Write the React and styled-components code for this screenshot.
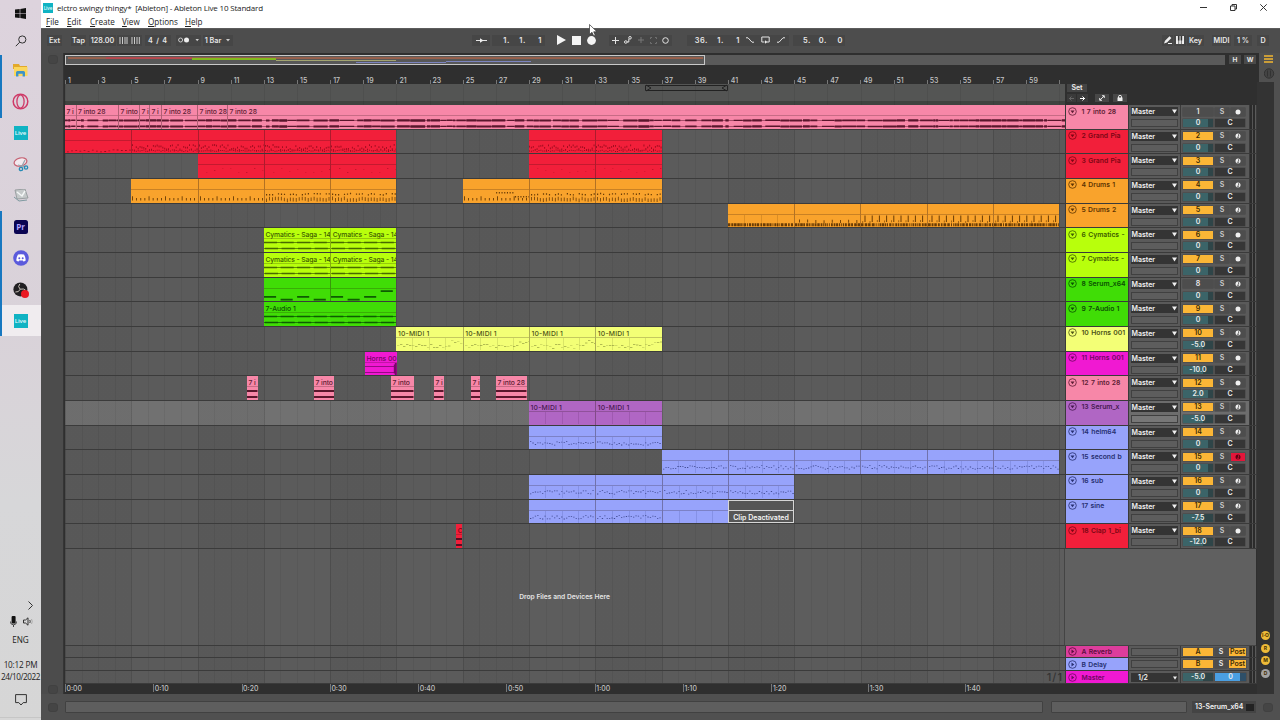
import React from "react";
import styled, { createGlobalStyle, css } from "styled-components";

const Global = createGlobalStyle`
  * { box-sizing: border-box; }
  html, body { margin: 0; padding: 0; }
  body { width: 1280px; height: 720px; overflow: hidden; background: #4c4c4c; }
  svg { display: block; flex: none; }
`;

const UI = `Inter, "Liberation Sans", sans-serif`;
const SYS = `"Open Sans", "Noto Sans", sans-serif`;
const BAR = 16.573;

/* ---------- shell ---------- */
const Screen = styled.div`
  display: flex;
  width: 1280px;
  height: 720px;
  overflow: hidden;
  position: relative;
  font-family: ${UI};
`;
const Taskbar = styled.aside`
  width: 41px;
  flex: none;
  display: flex;
  flex-direction: column;
  background: linear-gradient(#ddd3dd, #d9d2d9 45%, #d7d7d9 70%, #d6d6d6);
  color: #222;
  font-family: ${SYS};
`;
const TaskItem = styled.div`
  height: ${(p) => p.$h || 31.3}px;
  flex: none;
  display: flex;
  align-items: center;
  justify-content: center;
  padding-right: ${(p) => (p.$open ? 2 : 0)}px;
  border-left: ${(p) => (p.$open ? "2px solid #1878c0" : "0")};
  background: ${(p) => (p.$active ? "#f0ecef" : "transparent")};
`;
const LiveBadge = styled.div`
  width: ${(p) => p.$s || 14}px;
  height: ${(p) => p.$s || 14}px;
  flex: none;
  background: #10b3c3;
  color: #e9fbfd;
  font: 600 ${(p) => (p.$s ? 4.5 : 6)}px/${(p) => p.$s || 14}px ${SYS};
  text-align: center;
`;
const PrBadge = styled.div`
  width: 14px;
  height: 14px;
  border-radius: 2.5px;
  background: #0b0552;
  color: #b3a5ff;
  font: 700 8px/13px ${SYS};
  text-align: center;
`;
const Tray = styled.div`
  flex: 1;
  display: flex;
  flex-direction: column;
  justify-content: flex-end;
  align-items: center;
  font-size: 8.2px;
  line-height: 12px;
  white-space: nowrap;
  border-bottom: 1px solid #c6c6c6;
  margin-bottom: 2px;
`;
const TrayLine = styled.div`
  height: ${(p) => p.$h}px;
  flex: none;
  display: flex;
  align-items: center;
  justify-content: ${(p) => (p.$end ? "flex-end" : "center")};
  gap: 6px;
  width: 100%;
  padding-right: ${(p) => p.$pr || 0}px;
  padding-left: ${(p) => p.$pl || 0}px;
  letter-spacing: ${(p) => p.$ls || 0}px;
`;

const Win = styled.main`
  flex: 1;
  min-width: 0;
  display: flex;
  flex-direction: column;
  background: #4c4c4c;
`;
const TitleBar = styled.header`
  height: 15px;
  background: #fff;
  display: flex;
  align-items: center;
  font: 8px/15px ${SYS};
  color: #222;
  padding-left: 2px;
  white-space: pre;
`;
const TitleText = styled.span`
  margin-left: 4px;
  letter-spacing: -0.18px;
`;
const WinButtons = styled.div`
  margin: 0 13px 0 auto;
  display: flex;
  gap: 23px;
  align-items: center;
`;
const MenuBar = styled.nav`
  height: 13px;
  background: #fff;
  display: flex;
  padding-left: 5px;
  font: 8.1px/13px ${SYS};
  color: #222;
`;
const MenuItem = styled.span`
  width: ${(p) => p.$w}px;
  &::first-letter { text-decoration: underline; }
`;

/* ---------- transport ---------- */
const Transport = styled.div`
  height: 25px;
  padding-bottom: 2px;
  display: flex;
  align-items: center;
  background: #4d4d4d;
  border-top: 1px solid #5c5c5c;
  color: #e8e8e8;
  font: 600 7.2px/11px ${UI};
  white-space: pre;
`;
const Cell = styled.div`
  height: 11px;
  flex: none;
  width: ${(p) => p.$w}px;
  margin-left: ${(p) => p.$ml || 0}px;
  display: flex;
  align-items: center;
  justify-content: center;
  background: ${(p) => (p.$flat ? "transparent" : "#464646")};
  letter-spacing: ${(p) => p.$ls || 0}px;
`;
const Digits = styled(Cell)`
  justify-content: flex-end;
  padding-right: ${(p) => p.$pr || 2}px;
  font-size: 7.4px;
`;
const Digit = styled.span`
  width: 16px;
  text-align: right;
  letter-spacing: 0.6px;
`;

/* ---------- arrangement ---------- */
const Body = styled.div`
  display: flex;
  height: 641px;
  flex: none;
`;
const Gutter = styled.div`
  width: 23px;
  flex: none;
  padding: 2px 5px 0 7px;
  display: flex;
  flex-direction: column;
  justify-content: space-between;
  border-right: 1px solid #353535;
`;
const GhostKnob = styled.i`
  width: 10px;
  height: 9px;
  border-radius: 3px;
  margin-left: ${(p) => p.$ml || 0}px;
  background: #454545;
  border: 1px solid #414141;
`;
const Arrangement = styled.section`
  width: 1193px;
  flex: none;
  padding-left: 1px;
  display: flex;
  flex-direction: column;
  background: #2f2f2f;
`;
const OverviewRow = styled.div`
  height: 12px;
  padding-top: 2px;
  display: flex;
  flex: none;
`;
const Overview = styled.div`
  width: 1160px;
  height: 10px;
  background: #5a5a5a;
`;
const OverviewFrame = styled.div`
  width: 640px;
  height: 10px;
  border: 1px solid #c8c8c8;
  background: #585858;
`;
const MiniButton = styled.div`
  width: 12px;
  height: 9px;
  margin-left: ${(p) => p.$ml}px;
  background: #4a4a4a;
  color: #e6e6e6;
  font: 700 6.5px/10px ${UI};
  text-align: center;
`;
const Ruler = styled.div`
  height: 19px;
  flex: none;
  display: flex;
  align-items: flex-end;
  width: 1000px;
  overflow: hidden;
`;
const RulerMark = styled.div`
  flex: none;
  width: ${BAR * 2}px;
  height: 8px;
  padding-left: 3px;
  font: 500 7px/9px ${UI};
  color: #c4c4c4;
  background: linear-gradient(#777, #777) 0 4px / 1px 4px no-repeat;
`;
const LoopRow = styled.div`
  height: 21px;
  flex: none;
  display: flex;
`;
const ScrubArea = styled.div`
  width: 1000px;
  height: 21px;
  padding-left: 580px;
  background: repeating-linear-gradient(90deg, rgba(0,0,0,.07) 0 1px, transparent 1px ${BAR * 2}px),
    linear-gradient(#545554 0 17px, #404340 17px);
`;
const SetHeader = styled.div`
  width: 62px;
  margin-left: 1px;
  padding-left: 1px;
  font: 600 7px/8px ${UI};
  color: #eee;
`;
const SetLabel = styled.div`
  width: 20px;
  height: 8px;
  text-align: center;
  background: #444;
`;
const SetButtons = styled.div`
  display: flex;
  margin-top: 2px;
`;
const SetButton = styled.div`
  width: ${(p) => p.$w}px;
  height: 8px;
  margin-left: ${(p) => p.$ml || 0}px;
  background: ${(p) => p.$bg || "#474747"};
  display: flex;
  align-items: center;
  justify-content: center;
`;

const laneGrid = css`
  background-image: repeating-linear-gradient(90deg, rgba(0,0,0,.09) 0 1px, transparent 1px ${BAR * 4}px),
    repeating-linear-gradient(90deg, rgba(0,0,0,.06) 0 1px, transparent 1px ${BAR}px),
    repeating-linear-gradient(90deg, rgba(0,0,0,.03) 0 ${BAR * 4}px, transparent ${BAR * 4}px ${BAR * 8}px);
`;
const TrackRow = styled.div`
  height: 24.67px;
  flex: none;
  display: flex;
`;
const Lane = styled.div`
  width: 1000px;
  flex: none;
  display: flex;
  overflow: hidden;
  border-bottom: 1px solid #3b3b3b;
  background-color: ${(p) => (p.$sel ? "#717171" : "#5b5b5b")};
  ${laneGrid}
`;
const ClipBox = styled.div`
  height: 100%;
  flex: none;
  overflow: hidden;
  background: ${(p) => p.$c};
  color: ${(p) => p.$ink};
  border-left: ${(p) => (p.$split ? "1px solid rgba(40,20,20,.34)" : "0")};
`;
const ClipName = styled.div`
  height: 11px;
  padding-left: 1.5px;
  font: 500 6.8px/13px ${UI};
  letter-spacing: ${(p) => p.$ls}px;
  white-space: nowrap;
  border-bottom: 1px solid rgba(30,10,10,.22);
`;
const Deactivated = styled.div`
  height: 100%;
  border: 1px solid #d6d6d6;
  background: #565656;
  color: #f4f4f4;
  font: 600 7px/13px ${UI};
  text-align: center;
  white-space: nowrap;
  flex: none;
`;
const DeactivatedTop = styled.div`
  height: 10.5px;
  border-bottom: 1px solid #d6d6d6;
`;

/* ---------- track headers ---------- */
const Header = styled.div`
  width: 192px;
  display: flex;
  background: #3a3a3a;
  padding-left: 1px;
`;
const NameCell = styled.div`
  width: 62px;
  flex: none;
  display: flex;
  gap: 4.5px;
  padding: 1.5px 0 0 2px;
  margin-bottom: 1px;
  background: ${(p) => p.$c};
  color: ${(p) => p.$ink};
  font: 600 6.8px/9px ${UI};
  word-spacing: 0.6px;
  white-space: nowrap;
  overflow: hidden;
`;
const IoCell = styled.div`
  width: 51px;
  margin: 0 1px 1px;
  padding: ${(p) => (p.$small ? "2px 2px 0" : "2px 2px 0 1.5px")};
  background: ${(p) => (p.$sel ? "#6d6d6d" : "#5a5a5a")};
  flex: none;
`;
const Select = styled.div`
  height: 9px;
  padding: 0 1px 0 ${(p) => p.$pl || 1}px;
  display: flex;
  align-items: center;
  justify-content: space-between;
  background: #343434;
  color: #f0f0f0;
  font: 600 7px/9px ${UI};
`;
const EmptySlot = styled.div`
  height: 8px;
  margin-top: ${(p) => (p.$small ? 0 : 3)}px;
  border: 1px solid #404040;
  background: ${(p) => (p.$sel ? "#777" : "#5d5d5d")};
`;
const MixCell = styled.div`
  width: 68px;
  margin-bottom: 1px;
  flex: none;
  background: ${(p) => (p.$sel ? "#6d6d6d" : "#5a5a5a")};
  padding: ${(p) => (p.$small ? "2px" : "2.5px")} 0 0 2px;
  display: grid;
  grid-template-columns: 30px ${(p) => (p.$small ? "12px 17px" : "14px 14px")};
  grid-auto-rows: 8px;
  column-gap: 2px;
  row-gap: 3.5px;
  font: 600 7px/8px ${UI};
`;
const MixBox = styled.div`
  height: 8px;
  background: ${(p) => p.$bg};
  color: ${(p) => p.$fg || "#ececec"};
  grid-column: span ${(p) => p.$span || 1};
  display: flex;
  align-items: center;
  justify-content: center;
  box-shadow: 0 0 0 0.5px #444;
`;
const Meter = styled.div`
  flex: 1;
  margin: 0 1px 1px 1px;
  background: linear-gradient(90deg, #2b2b2b 0 2px, #555 2px 3px, #2b2b2b 3px 5px, #5a5a5a 5px);
`;

const DropArea = styled.div`
  height: 97px;
  flex: none;
  display: flex;
`;
const DropLane = styled.div`
  width: 1000px;
  display: flex;
  align-items: center;
  justify-content: center;
  background-color: #5d5d5d;
  border-bottom: 1px solid #3b3b3b;
  border-right: 1px solid #444;
  ${laneGrid}
  color: #e4e4e4;
  font: 600 6.7px/10px ${UI};
`;
const DropSide = styled.div`
  flex: 1;
  margin-right: 1px;
  background: #606060;
  border-bottom: 1px solid #444;
`;
const ReturnRow = styled.div`
  height: 12.6px;
  flex: none;
  display: flex;
`;
const Fraction = styled.span`
  margin-left: auto;
  margin-right: 2px;
  font: 500 11px/13px ${UI};
  letter-spacing: 1px;
  color: #343434;
`;
const TimeRuler = styled.div`
  height: 11px;
  flex: none;
  display: flex;
  width: 1000px;
`;
const TimeMark = styled.div`
  flex: none;
  width: ${(p) => (p.$wide ? 96.8 : 88.3)}px;
  height: 8px;
  padding-left: 0.5px;
  border-left: 1px solid #777;
  font: 500 6.9px/9px ${UI};
  color: #c0c0c0;
`;
const Rail = styled.div`
  width: 23px;
  flex: none;
  display: flex;
  flex-direction: column;
  background: #505050;
`;
const RailTop = styled.div`
  height: 29px;
  padding: 1px 0 0 5px;
  border-left: 2px solid #2f2f2f;
  display: flex;
  flex-direction: column;
  gap: 4px;
`;
const RailBody = styled.div`
  width: 17px;
  flex: 1;
  background: #333;
  display: flex;
  flex-direction: column;
  align-items: center;
  justify-content: flex-end;
  gap: 3.7px;
  padding-bottom: 16px;
`;
const RailDot = styled.div`
  width: 9px;
  height: 9px;
  border-radius: 50%;
  background: ${(p) => p.$c};
  color: #463200;
  font: 700 5px/9px ${UI};
  text-align: center;
`;
const Status = styled.footer`
  flex: 1;
  display: flex;
  align-items: center;
  padding-left: 7px;
  background: #505050;
`;
const StatusBox = styled.div`
  width: ${(p) => p.$w}px;
  margin-left: ${(p) => p.$ml}px;
  height: 12px;
  background: #5e5e5e;
  border: 1px solid #414141;
  border-radius: 1px;
`;
const DeviceTab = styled.div`
  margin-left: 5px;
  width: 64px;
  height: 12px;
  padding-left: 3px;
  display: flex;
  align-items: center;
  gap: 3px;
  background: #444;
  color: #f5f5f5;
  font: 600 6.9px/12px ${UI};
  &::after { content: ""; width: 8px; height: 7px; background: #222; }
`;
const Pointer = styled.svg`
  position: absolute;
  left: 589px;
  top: 24px;
`;

/* ---------- data ---------- */
const C = {
  pink: ["#f787a8", "#5d1c33"],
  red: ["#f21f3a", "#7b0614"],
  orange: ["#f9a32c", "#5d3302"],
  lime: ["#b8ff0c", "#3d5c00"],
  green: ["#40dd06", "#0a5002"],
  yellow: ["#f3ff76", "#4c5216"],
  magenta: ["#f019d2", "#6f0661"],
  purple: ["#b066c4", "#46184f"],
  blue: ["#97a3fb", "#262f70"],
};
const b = (n) => (n - 1) * BAR;
const run = (from, to, kind, name) => {
  const out = [];
  for (let i = from; i < to; i += 4) out.push({ s: b(i), e: b(i + 4), kind, name, split: i > from });
  return out;
};
const px = (list, kind) => list.map(([s, e, name, split]) => ({ s: s - 65, e: e - 65, kind, name, split }));

const tracks = [
  { name: "1 7 into 28", c: "pink", on: false, audio: true, vol: "0",
    clips: px([[65, 75.5, "7 i"], [75.5, 118, "7 into 28", 1], [118, 139, "7 into", 1], [139, 149, "7 i", 1], [149, 161, "7 i", 1], [161, 197, "7 into 28", 1], [197, 227, "7 into 28", 1], [227, 1065, "7 into 28", 1]], "wave") },
  { name: "2 Grand Pia", c: "red", vol: "0", clips: [{ s: 0, e: b(5), kind: "sparse" }, ...run(5, 21, "dense").map((c) => ({ ...c, split: true })), ...run(29, 37, "dense")] },
  { name: "3 Grand Pia", c: "red", vol: "0", clips: [...run(9, 21, "few"), ...run(29, 37, "few")] },
  { name: "4 Drums 1", c: "orange", vol: "0", clips: [...run(5, 13, "kick"), ...run(13, 21, "kit").map((c) => ({ ...c, split: true })), ...run(25, 29, "kick2"), ...run(29, 37, "kit").map((c) => ({ ...c, split: true }))] },
  { name: "5 Drums 2", c: "orange", vol: "0", clips: [...run(41, 45, "hat"), ...run(45, 49, "hat2").map((c) => ({ ...c, split: true })), ...run(49, 61, "hat3").map((c) => ({ ...c, split: true }))] },
  { name: "6 Cymatics -", c: "lime", audio: true, vol: "0", clips: run(13, 21, "bands", "Cymatics - Saga - 14") },
  { name: "7 Cymatics -", c: "lime", audio: true, vol: "0", clips: run(13, 21, "bands", "Cymatics - Saga - 14") },
  { name: "8 Serum_x64", c: "green", on: false, vol: "0", clips: [{ ...run(13, 17, "steps")[0] }, { ...run(17, 21, "steps2")[0], split: true }] },
  { name: "9 7-Audio 1", c: "green", audio: true, vol: "0", clips: [{ s: b(13), e: b(21), kind: "bands", name: "7-Audio 1" }] },
  { name: "10 Horns 001", c: "yellow", vol: "-5.0", clips: run(21, 37, "melody", "10-MIDI 1") },
  { name: "11 Horns 001", c: "magenta", audio: true, vol: "-10.0", clips: px([[365, 396.8, "Horns 00"]], "horn") },
  { name: "12 7 into 28", c: "pink", audio: true, vol: "2.0", clips: px([[247, 257.5, "7 i"], [314, 334, "7 into"], [391, 413.5, "7 into"], [434, 443.5, "7 i"], [471, 480, "7 i"], [496, 526.5, "7 into 28"]], "solid") },
  { name: "13 Serum_x", c: "purple", vol: "-5.0", sel: true, clips: run(29, 37, "ticks", "10-MIDI 1") },
  { name: "14 helm64", c: "blue", vol: "0", clips: run(29, 37, "bass") },
  { name: "15 second b", c: "blue", vol: "0", armed: true, clips: run(37, 61, "bass") },
  { name: "16 sub", c: "blue", vol: "0", clips: run(29, 45, "bass") },
  { name: "17 sine", c: "blue", vol: "-7.5", clips: [...run(29, 37, "bass"), { s: b(37), e: b(41), kind: "ticks", split: true }, { s: b(41), e: b(45), off: true }] },
  { name: "18 Clap 1_bi", c: "red", audio: true, vol: "-12.0", clips: px([[456.3, 462.3, "C"]], "solid") },
];

/* Note and waveform rectangles, as [x, y, width, height] inside the 13px clip body. */
function marks(kind, w, seed) {
  let s = seed * 7919 + 13;
  const r = () => ((s = (s * 16807) % 2147483647) / 2147483647);
  const out = [];
  const beat = BAR / 4;
  const barTicks = () => { for (let x = BAR; x < w - 2; x += BAR) out.push([x, 0, 0.2, 12]); };
  switch (kind) {
    case "wave":
      out.push([0, 4, w, 0.6], [0, 10, w, 0.6]);
      for (let x = 0; x < w; ) {
        const l = 2 + r() * 13, h = 1.3 + r() * 1.2;
        const L = Math.min(l, w - x);
        out.push([x, 4.4 - h / 2, L, h], [x, 10.4 - h / 2, L, h]);
        x += l + (r() > 0.55 ? r() * 5 : 0.4);
      }
      break;
    case "solid": out.push([0, 3, w, 2], [0, 9, w, 2]); break;
    case "horn": out.push([0, 3.2, w, 0.8], [0, 9.3, w, 0.8], [w - 3, 1.5, 1, 9], [w - 2, 0, 2, 12]); break;
    case "bands":
      for (let x = 0; x < w; x += BAR) out.push([x, 2.8, BAR - 3.5, 1.5], [x + 1, 8.8, BAR - 3.5, 1.5]);
      out.push([0, 3.3, w, 0.6], [0, 9.2, w, 0.8]);
      break;
    case "steps": [7, 9.8, 7, 9.8].forEach((y, i) => out.push([i * BAR, y, BAR - 4.5, 1.7])); break;
    case "steps2": [7, 9.8, 7, 1.2].forEach((y, i) => out.push([i * BAR, y, BAR - 4.5, 1.7])); break;
    case "sparse": for (let x = 2; x < w; x += beat) out.push([x, 8.5 + r() * 2, 1.8, 0.8]); break;
    case "dense":
      for (let x = 0; x < w; x += 1.9) out.push([x, 3 + r() * 6, 0.9, 1.8], [x, 8.5 + r() * 1.5, 1, 1]);
      break;
    case "few": for (let x = 8; x < w; x += 8) out.push([x, 3 + r() * 5, 1.4, 0.3]); break;
    case "kick": case "kick2":
      for (let x = 1, i = 0; x < w; x += beat, i++) out.push([x, i % 4 ? 8 : 6.3, 0.9, i % 4 ? 2.6 : 4.3]);
      if (kind === "kick2") for (let x = w / 2; x < w; x += 2.7) out.push([x, x > w * 0.75 ? 6 : 2, 1.1, 1.5]);
      break;
    case "kit":
      for (let x = 1, i = 0; x < w; x += beat * 0.72, i++) {
        out.push([x, 6.6 + r() * 2, 0.8, 3.6]);
        if (i % 4 !== 3) out.push([x, 2.8 + r() * 1.5, 1.2, 1.4]);
      }
      break;
    case "hat": case "hat2": case "hat3":
      for (let x = 0; x < w; ) { const l = 0.8 + r() * 2; out.push([x, 8.3, l, 3]); x += l + 0.5 + r() * 0.7; }
      if (kind === "hat2") for (let x = 4; x < w; x += 8.2) out.push([x, 4.5 + r(), 0.9, 3]);
      if (kind === "hat3") for (let x = 3.5; x < w; x += 7.2) out.push([x, 0.6, 1, 6.4], [x - 2, 5 + r(), 0.6, 2]);
      if (kind === "hat") barTicks();
      break;
    case "melody":
      barTicks();
      for (let x = 1; x < w; x += 3) out.push([x, 6 + r() * 4 - (x > w * 0.8 ? 4 : 0), 2.4, 0.4]);
      break;
    case "bass":
      for (let x = 1; x < w - 1; x += 2.4) out.push([x, 4.2 + r() * 3.6, 1.3, 0.8]);
      barTicks();
      break;
    case "ticks": barTicks(); break;
    default:
  }
  return out;
}

const Clip = ({ clip, prev, color, seed }) => {
  const w = clip.e - clip.s;
  const pos = { width: w, marginLeft: clip.s - prev };
  if (clip.off)
    return (
      <Deactivated style={pos}>
        <DeactivatedTop />
        Clip Deactivated
      </Deactivated>
    );
  const [bg, ink] = C[color];
  const soft = ["bass", "dense", "sparse", "few", "melody", "ticks"].includes(clip.kind);
  const fill = clip.kind === "wave" || clip.kind === "solid" ? "#4c0c22" : ink;
  const d = marks(clip.kind, w, seed).map(([x, y, a, h]) => `M${x.toFixed(1)} ${y.toFixed(1)}h${a.toFixed(1)}v${h.toFixed(1)}h-${a.toFixed(1)}z`).join("");
  const name = clip.name || "";
  return (
    <ClipBox $c={bg} $ink={ink} $split={clip.split} style={pos}>
      <ClipName $ls={name.startsWith("10") ? 0.2 : name.startsWith("Cym") ? -0.12 : name.startsWith("7 ") ? -0.08 : 0}>{name}</ClipName>
      <svg width={w} height="13">
        <path d={d} fill={fill} opacity={soft ? 0.75 : 0.92} />
      </svg>
    </ClipBox>
  );
};

const Fold = ({ right }) => (
  <svg width="9" height="9" viewBox="0 0 9 9">
    <circle cx="4.5" cy="4.5" r="3.8" fill="none" stroke="currentColor" strokeWidth=".8" />
    <path d={right ? "M3.5 2.6L6.3 4.5L3.5 6.4z" : "M2.5 3.5H6.5L4.5 6.3z"} fill="currentColor" />
  </svg>
);
const Down = ({ s = 5 }) => (
  <svg width={s} height={s} viewBox="0 0 5 5"><path d="M0 .5H5L2.5 4.6z" fill="#f0f0f0" /></svg>
);
const Arm = ({ audio, armed }) => (
  <svg width="6" height="6" viewBox="0 0 6 6">
    <circle cx="3" cy="3" r="2.5" fill={armed ? "#5c0011" : "#f0f0f0"} />
    {!audio && <path d="M3.6 1.2v2.3M3.4 3.7a.7.7 0 1 1-.9 0" stroke={armed ? "#e3163a" : "#444"} strokeWidth=".8" fill="none" />}
  </svg>
);

const teal = (pct = 82) => `linear-gradient(90deg, #3b6468 ${pct}%, #2f4548 ${pct}%)`;

const Track = ({ t, i }) => {
  const on = t.on !== false;
  return (
    <TrackRow>
      <Lane $sel={t.sel}>
        {t.clips.map((c, k) => (
          <Clip key={k} clip={c} prev={k ? t.clips[k - 1].e : 0} color={t.c} seed={i * 31 + k + 1} />
        ))}
      </Lane>
      <Header>
        <NameCell $c={C[t.c][0]} $ink={C[t.c][1]}><Fold />{t.name}</NameCell>
        <IoCell $sel={t.sel}>
          <Select>Master<Down /></Select>
          <EmptySlot $sel={t.sel} />
        </IoCell>
        <MixCell $sel={t.sel}>
          <MixBox $bg={on ? "#fbb636" : "#4d4d4d"} $fg={on ? "#3c2a06" : "#eee"}>{i + 1}</MixBox>
          <MixBox $bg="#4d4d4d" $fg="#ccc">S</MixBox>
          <MixBox $bg={t.armed ? "#e3163a" : "#4d4d4d"}><Arm audio={t.audio} armed={t.armed} /></MixBox>
          <MixBox $bg={teal(t.vol === "0" || t.vol === "2.0" ? 82 : 66)}>{t.vol}</MixBox>
          <MixBox $bg="#363636" $span={2}>C</MixBox>
        </MixCell>
        <Meter />
      </Header>
    </TrackRow>
  );
};

const I = ({ w, h, vb, children, ...p }) => (
  <svg width={w} height={h} viewBox={vb || `0 0 ${w} ${h}`} fill="none" stroke="#e4e4e4" strokeWidth="1" {...p}>{children}</svg>
);

const Sidebar = () => (
  <Taskbar>
    <TaskItem $h={26}><svg width="11" height="11" viewBox="0 0 11 11" fill="#111"><path d="M0 1.6L4.7 1V5.2H0zM5.3.9L11 0V5.2H5.3zM0 5.8H4.7V10L0 9.4zM5.3 5.8H11V11L5.3 10.1z" /></svg></TaskItem>
    <TaskItem $h={29}><I w={12} h={12} stroke="#333"><circle cx="7.3" cy="4.5" r="3.6" /><path d="M4.7 7.2L.8 11.2" /></I></TaskItem>
    <TaskItem $open>
      <svg width="15" height="13" viewBox="0 0 15 13"><path d="M0 0H6L7 2H14V5H0z" fill="#e3a92b" /><path d="M1 3H14.5V12H1z" fill="#fbd75d" /><path d="M3 12.5V8.5Q3 7 4.5 7H10.5Q12 7 12 8.5V12.5H9.6V9.8H5.4V12.5z" fill="#3d93c8" /></svg>
    </TaskItem>
    <TaskItem $open>
      <svg width="17" height="17" viewBox="0 0 17 17" fill="none" stroke="#cf3a68"><circle cx="8.5" cy="8.5" r="7.3" strokeWidth="1.5" /><ellipse cx="8.5" cy="8.5" rx="3.6" ry="6.6" strokeWidth="1.3" /></svg>
    </TaskItem>
    <TaskItem><LiveBadge>Live</LiveBadge></TaskItem>
    <TaskItem>
      <svg width="16" height="15" viewBox="0 0 16 15"><ellipse cx="7.5" cy="5" rx="6.5" ry="4" fill="#f2e9ee" stroke="#c56172" strokeWidth="1.2" transform="rotate(-15 7.5 5)" /><path d="M12 3L8 11M5 8L13 10" stroke="#98a5ae" strokeWidth="1.2" /><circle cx="8" cy="12" r="1.7" fill="none" stroke="#258bb5" strokeWidth="1.3" /><circle cx="13" cy="10.5" r="1.7" fill="none" stroke="#258bb5" strokeWidth="1.3" /></svg>
    </TaskItem>
    <TaskItem>
      <svg width="16" height="13" viewBox="0 0 16 13"><path d="M2 1L12 0L15 9L4 10z" fill="#c5c9ca" stroke="#8d9496" strokeWidth=".8" /><path d="M4 3L9 7L12 2" stroke="#f4f7f7" strokeWidth="1.5" fill="none" /><path d="M1 8L6 12L14 11" stroke="#7f9aa0" fill="none" /></svg>
    </TaskItem>
    <TaskItem $open><PrBadge>Pr</PrBadge></TaskItem>
    <TaskItem $open>
      <svg width="16" height="16" viewBox="0 0 16 16"><circle cx="8" cy="8" r="7.8" fill="#5b5bdc" /><path d="M5 4.6Q8 3.8 11 4.6Q12.8 7.5 12.7 10.4Q11.6 11.4 10.4 11.5L9.8 10.6H6.2L5.6 11.5Q4.4 11.4 3.3 10.4Q3.2 7.5 5 4.6z" fill="#fff" /><circle cx="6.3" cy="8.2" r="1" fill="#5b5bdc" /><circle cx="9.7" cy="8.2" r="1" fill="#5b5bdc" /></svg>
    </TaskItem>
    <TaskItem $open>
      <svg width="16" height="16" viewBox="0 0 16 16"><circle cx="7.4" cy="7.4" r="7" fill="#211f22" /><g fill="none" stroke="#c9c2ba" strokeWidth="1"><path d="M6.8 2Q4.2 4.5 7.2 7.2M7.2 7.2Q11 6.4 12.4 8M7.2 7.2Q5.8 10.6 2.4 10" /></g><circle cx="12" cy="12" r="4" fill="#ea1822" /></svg>
    </TaskItem>
    <TaskItem $open $active $h={31}><LiveBadge>Live</LiveBadge></TaskItem>
    <Tray>
      <TrayLine $h={16} $end $pr={8}><I w={5} h={9} stroke="#333"><path d="M.5 .5L4.5 4.5L.5 8.5" /></I></TrayLine>
      <TrayLine $h={17} $pl={3}>
        <svg width="7" height="11" viewBox="0 0 7 11"><rect x="1.6" width="4" height="7.5" rx="1" fill="#111" /><path d="M.4 5.5Q.4 8.8 3.5 8.8T6.6 5.5M3.5 9V11" stroke="#444" fill="none" /></svg>
        <I w={11} h={9} stroke="#333"><path d="M.5 3H2.5L5 .8V8.2L2.5 6H.5z" /><path d="M6.8 3Q7.6 4.5 6.8 6" /><path d="M8.5 2Q10 4.5 8.5 7" stroke="#aaa" /></I>
      </TrayLine>
      <TrayLine $h={20}>ENG</TrayLine>
      <TrayLine $h={9} />
      <TrayLine $h={12} $ls={-0.2}>10:12 PM</TrayLine>
      <TrayLine $h={12} $ls={-0.45}>24/10/2022</TrayLine>
      <TrayLine $h={34}><I w={12} h={12} stroke="#333"><path d="M.6 .6H11.4V8.6H8.2L6 11L3.8 8.6H.6z" /></I></TrayLine>
    </Tray>
  </Taskbar>
);

const TransportBar = () => (
  <Transport>
    <Cell $ml={6} $w={15}>Ext</Cell>
    <Cell $ml={9} $w={15}>Tap</Cell>
    <Cell $ml={3} $w={27}>128.00</Cell>
    <Cell $ml={1} $w={25}>
      <I w={21} h={7} stroke="#ccc"><path d="M1 0V7M3.5 0V7M6 0V7M8 0V7M13 0V7M15.5 0V7M18 0V7M20.3 0V7" /></I>
    </Cell>
    <Cell $ml={3} $w={26} $ls={0.8}>4 / 4</Cell>
    <Cell $ml={5} $w={25}>
      <svg width="21" height="6" viewBox="0 0 21 6"><circle cx="2.6" cy="3" r="2" fill="none" stroke="#ccc" /><circle cx="8.5" cy="3" r="2.5" fill="#eee" /><path d="M17.5 2H21L19.2 4.2z" fill="#ccc" /></svg>
    </Cell>
    <Cell $ml={2} $w={20}>1 Bar</Cell>
    <Cell $w={10}><svg width="4" height="3"><path d="M0 0H4L2 2.6z" fill="#ccc" /></svg></Cell>
    <Cell $ml={239} $w={18}><I w={11} h={5}><path d="M0 2.5H11" /><path d="M4 .2L7.5 2.5L4 4.8z" fill="#eee" stroke="none" /></I></Cell>
    <Digits $ml={2} $w={53} $pr={3}><Digit>1.</Digit><Digit>1.</Digit><Digit>1</Digit></Digits>
    <Cell $flat $ml={7} $w={18}><svg width="9" height="10"><path d="M0 0L9 5L0 10z" fill="#f4f4f4" /></svg></Cell>
    <Cell $flat $w={13}><svg width="9" height="9"><path d="M0 0H9V9H0z" fill="#f4f4f4" /></svg></Cell>
    <Cell $flat $ml={2} $w={13}><svg width="9" height="9"><circle cx="4.5" cy="4.5" r="4.4" fill="#f4f4f4" /></svg></Cell>
    <Cell $ml={11} $w={12}><I w={7} h={7}><path d="M0 3.5H7M3.5 0V7" /></I></Cell>
    <Cell $w={13}><I w={8} h={8}><circle cx="1.8" cy="6" r="1.3" /><circle cx="6" cy="1.8" r="1.3" /><path d="M3 6H4.8V3" /></I></Cell>
    <Cell $w={13}><I w={6} h={6} stroke="#777"><path d="M0 3H6M3 0V6" /></I></Cell>
    <Cell $w={12}><I w={7} h={7} stroke="#707070"><path d="M.5 2V.5H2M5 .5H6.5V2M6.5 5V6.5H5M2 6.5H.5V5" /></I></Cell>
    <Cell $w={13}><I w={7} h={7}><circle cx="3.5" cy="3.5" r="2.8" /></I></Cell>
    <Digits $ml={15} $w={55}><Digit>36.</Digit><Digit>1.</Digit><Digit>1</Digit></Digits>
    <Cell $w={16}><I w={8} h={6}><path d="M0 .8H2L6 5.2H8" /></I></Cell>
    <Cell $w={15}><I w={9} h={8}><path d="M3.5 6H.8V1H8.2V6H5.5" /><path d="M4 4.2L6.3 6L4 7.8z" fill="#eee" stroke="none" /></I></Cell>
    <Cell $w={16}><I w={8} h={6}><path d="M0 5.2H2L6 .8H8" /></I></Cell>
    <Digits $ml={4} $w={52}><Digit>5.</Digit><Digit>0.</Digit><Digit>0</Digit></Digits>
    <Cell $ml={317} $w={11}><svg width="8" height="8" viewBox="0 0 8 8"><path d="M0 7.5L1 4.8L5.5 .2L7.4 2L3 6.5zM4 7H8V8H4z" fill="#eee" /></svg></Cell>
    <Cell $ml={1} $w={12}><svg width="8" height="8" viewBox="0 0 8 8"><path d="M0 0H8V8H0z" fill="#eee" /><path d="M2.7 0V8M5.4 0V8" stroke="#444" strokeWidth=".7" /><path d="M2.7 0V4.5M5.4 0V4.5" stroke="#333" strokeWidth="1.6" /></svg></Cell>
    <Cell $ml={1} $w={17}>Key</Cell>
    <Cell $ml={8} $w={19}>MIDI</Cell>
    <Cell $ml={3} $w={18}>1 %</Cell>
    <Cell $ml={5} $w={12}>D</Cell>
  </Transport>
);

const odd = Array.from({ length: 30 }, (_, i) => i * 2 + 1);
const times = ["0:00", "0:10", "0:20", "0:30", "0:40", "0:50", "1:00", "1:10", "1:20", "1:30", "1:40"];

export default function App() {
  return (
    <Screen>
      <Global />
      <Sidebar />
      <Win>
        <TitleBar>
          <LiveBadge $s={10}>Live</LiveBadge>
          <TitleText>{"elctro swingy thingy*  [Ableton] - Ableton Live 10 Standard"}</TitleText>
          <WinButtons>
            <I w={7} h={7} stroke="#333"><path d="M0 3.5H7" /></I>
            <I w={7} h={7} stroke="#333"><path d="M.5 2H5V6.5H.5zM2 2V.5H6.5V5H5" /></I>
            <I w={7} h={7} stroke="#333"><path d="M.3 .3L6.7 6.7M6.7 .3L.3 6.7" /></I>
          </WinButtons>
        </TitleBar>
        <MenuBar>
          <MenuItem $w={21}>File</MenuItem>
          <MenuItem $w={23}>Edit</MenuItem>
          <MenuItem $w={32}>Create</MenuItem>
          <MenuItem $w={26}>View</MenuItem>
          <MenuItem $w={37}>Options</MenuItem>
          <MenuItem $w={20}>Help</MenuItem>
        </MenuBar>
        <TransportBar />
        <Body>
          <Gutter><GhostKnob /><GhostKnob /></Gutter>
          <Arrangement>
            <OverviewRow>
              <Overview>
                <OverviewFrame>
                  <svg width="638" height="8">
                    <path d="M2 2H637" stroke="#96604c" strokeWidth="2" />
                    <path d="M40 2H126" stroke="#b5484d" strokeWidth="2" />
                    <path d="M126 3H210" stroke="#82b91c" strokeWidth="2" />
                    <path d="M210 4.5H330" stroke="#a2a470" />
                    <path d="M290 6.5H380M380 5.5H465" stroke="#7c84c0" />
                  </svg>
                </OverviewFrame>
              </Overview>
              <MiniButton $ml={4}>H</MiniButton>
              <MiniButton $ml={3}>W</MiniButton>
            </OverviewRow>
            <Ruler>{odd.map((n) => <RulerMark key={n}>{n}</RulerMark>)}<RulerMark /></Ruler>
            <LoopRow>
              <ScrubArea>
                <I w={83} h={8} stroke="#222"><path d="M.5 1.5H82.5V6.5H.5zM1 1L6 4L1 7M82 1L77 4L82 7" /></I>
              </ScrubArea>
              <SetHeader>
                <SetLabel>Set</SetLabel>
                <SetButtons>
                  <SetButton $w={9} $bg="#3a3a3a"><I w={5} h={5} stroke="#666"><path d="M0 2.5H5M2.5 .5L.5 2.5L2.5 4.5" /></I></SetButton>
                  <SetButton $w={11} $bg="#3a3a3a" $ml={1}><I w={5} h={5} stroke="#fff"><path d="M0 2.5H5M2.5 .5L4.5 2.5L2.5 4.5" /></I></SetButton>
                  <SetButton $w={14} $ml={7}><I w={6} h={6}><path d="M1 5L5 1M3 .7H5.3V3M.7 3V5.3H3" /></I></SetButton>
                  <SetButton $w={14} $ml={4}><svg width="6" height="6"><path d="M.5 2.5H5.5V6H.5z" fill="#eee" /><path d="M1.5 3V1.8a1.5 1.5 0 0 1 3 0V3" fill="none" stroke="#eee" /></svg></SetButton>
                </SetButtons>
              </SetHeader>
            </LoopRow>
            {tracks.map((t, i) => <Track key={t.name} t={t} i={i} />)}
            <DropArea>
              <DropLane>Drop Files and Devices Here</DropLane>
              <DropSide />
            </DropArea>
            {[["A Reverb", "#dd3d9c", "#5b0d3c", "A"], ["B Delay", ...C.blue, "B"]].map(([n, c, ink, l]) => (
              <ReturnRow key={n}>
                <Lane />
                <Header>
                  <NameCell $c={c} $ink={ink}><Fold right />{n}</NameCell>
                  <IoCell $small><EmptySlot $small /></IoCell>
                  <MixCell $small>
                    <MixBox $bg="#fbb636" $fg="#3c2a06">{l}</MixBox>
                    <MixBox $bg="#4d4d4d">S</MixBox>
                    <MixBox $bg="#fbb636" $fg="#3c2a06">Post</MixBox>
                  </MixCell>
                  <Meter />
                </Header>
              </ReturnRow>
            ))}
            <ReturnRow>
              <Lane><Fraction>1/1</Fraction></Lane>
              <Header>
                <NameCell $c={C.magenta[0]} $ink={C.magenta[1]}><Fold right />Master</NameCell>
                <IoCell $small><Select $pl={7}>1/2<Down s={4} /></Select></IoCell>
                <MixCell $small>
                  <MixBox $bg={teal(66)}>-5.0</MixBox>
                  <MixBox $bg="linear-gradient(90deg, #4a9fe2 80%, #2e4f68 80%)" $span={2}>0</MixBox>
                </MixCell>
                <Meter />
              </Header>
            </ReturnRow>
            <TimeRuler>{times.map((t, i) => <TimeMark key={t} $wide={i > 7}>{t}</TimeMark>)}</TimeRuler>
          </Arrangement>
          <Rail>
            <RailTop>
              <I w={9} h={10} stroke="#f2b630" strokeWidth="1.4"><path d="M0 2H9M0 5H9M0 8H9" /></I>
              <I w={11} h={11} stroke="#333"><circle cx="5" cy="5.5" r="4.7" fill="#444" /><path d="M3.5 2.5V8.5M6.5 2.5V8.5" /></I>
            </RailTop>
            <RailBody>
              <RailDot $c="#eebb38">I·O</RailDot>
              <RailDot $c="#eebb38">R</RailDot>
              <RailDot $c="#eebb38">M</RailDot>
              <RailDot $c="#a3a3a3">D</RailDot>
            </RailBody>
          </Rail>
        </Body>
        <Status>
          <GhostKnob />
          <StatusBox $ml={7} $w={978} />
          <StatusBox $ml={8} $w={136} />
          <DeviceTab>13-Serum_x64</DeviceTab>
          <GhostKnob $ml={7} />
        </Status>
      </Win>
      <Pointer width="9" height="13" viewBox="0 0 9 13"><path d="M.5 .5V10.5L3 8.3L4.7 12L6.3 11.3L4.7 7.8H8z" fill="#fff" stroke="#333" strokeWidth=".7" /></Pointer>
    </Screen>
  );
}
